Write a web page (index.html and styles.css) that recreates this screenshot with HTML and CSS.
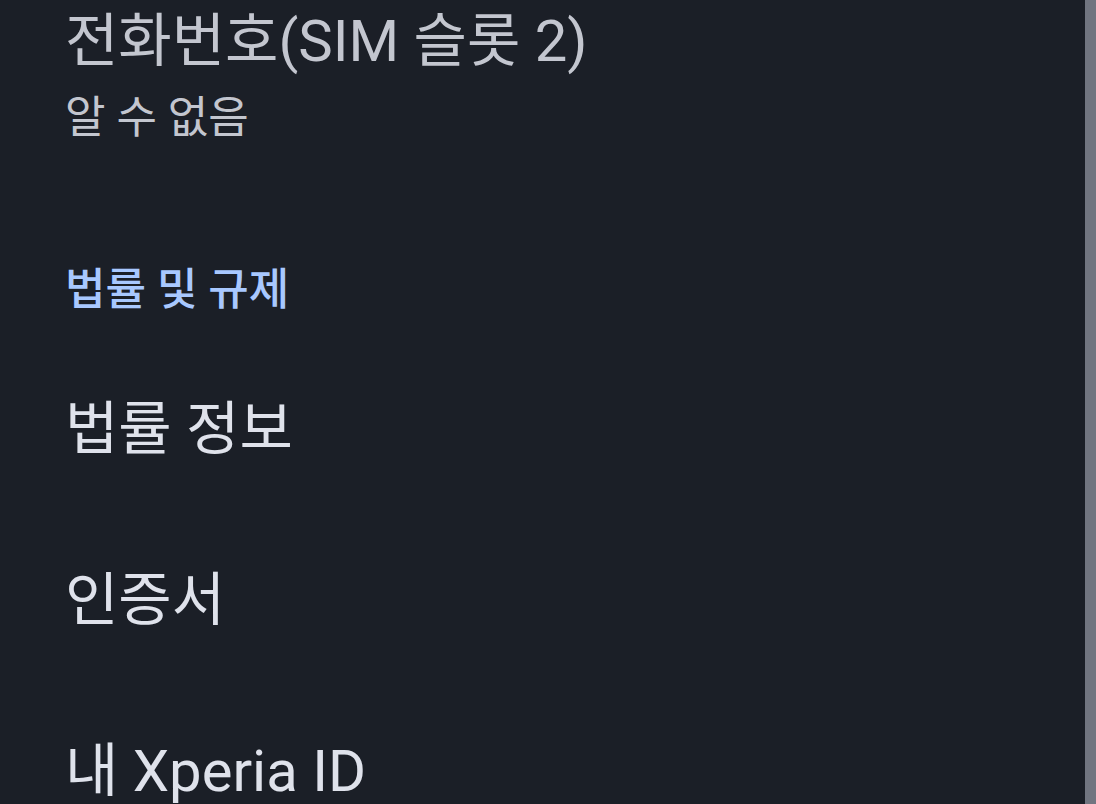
FILE: index.html
```html
<!DOCTYPE html>
<html lang="ko">
<head>
    <meta charset="UTF-8">
    <title>휴대전화 정보</title>
    <link rel="stylesheet" href="styles.css">
</head>
<body>
    <div class="screen">
        <div class="settings-list">
            <div class="item item-two-line">
                <div class="item-title dim">전화번호(SIM 슬롯 2)</div>
                <div class="item-summary">알 수 없음</div>
            </div>

            <div class="category">법률 및 규제</div>

            <div class="item">
                <div class="item-title">법률 정보</div>
            </div>
            <div class="item">
                <div class="item-title">인증서</div>
            </div>
            <div class="item">
                <div class="item-title">내 Xperia ID</div>
            </div>
        </div>
        <div class="scrollbar"></div>
    </div>
</body>
</html>
```

FILE: styles.css
```css
* {
    box-sizing: border-box;
}

html,
body {
    margin: 0;
    padding: 0;
    height: 100%;
    overflow: hidden;
    background-color: #1b1f27;
}

body {
    font-family: Roboto, "Noto Sans CJK KR", sans-serif;
}

.screen {
    display: flex;
    height: 804px;
}

.settings-list {
    flex: 1;
    padding-left: 65px;
    display: flex;
    flex-direction: column;
}

.scrollbar {
    width: 11px;
    background-color: #717580;
}

.item {
    height: 171px;
    display: flex;
    flex-direction: column;
    justify-content: center;
    flex-shrink: 0;
}

.item-two-line {
    height: auto;
    margin-top: 1px;
    padding-bottom: 116px;
}

.item-title {
    font-size: 58px;
    line-height: 80px;
    color: #dfe2eb;
}

.item-title.dim {
    color: #c3c6cf;
}

.item-summary {
    margin-top: 9px;
    font-size: 44px;
    line-height: 56px;
    color: #c3c6cf;
}

.category {
    margin-bottom: 25px;
    font-size: 44px;
    font-weight: 500;
    line-height: 56px;
    color: #a8c8ff;
    flex-shrink: 0;
}
```
